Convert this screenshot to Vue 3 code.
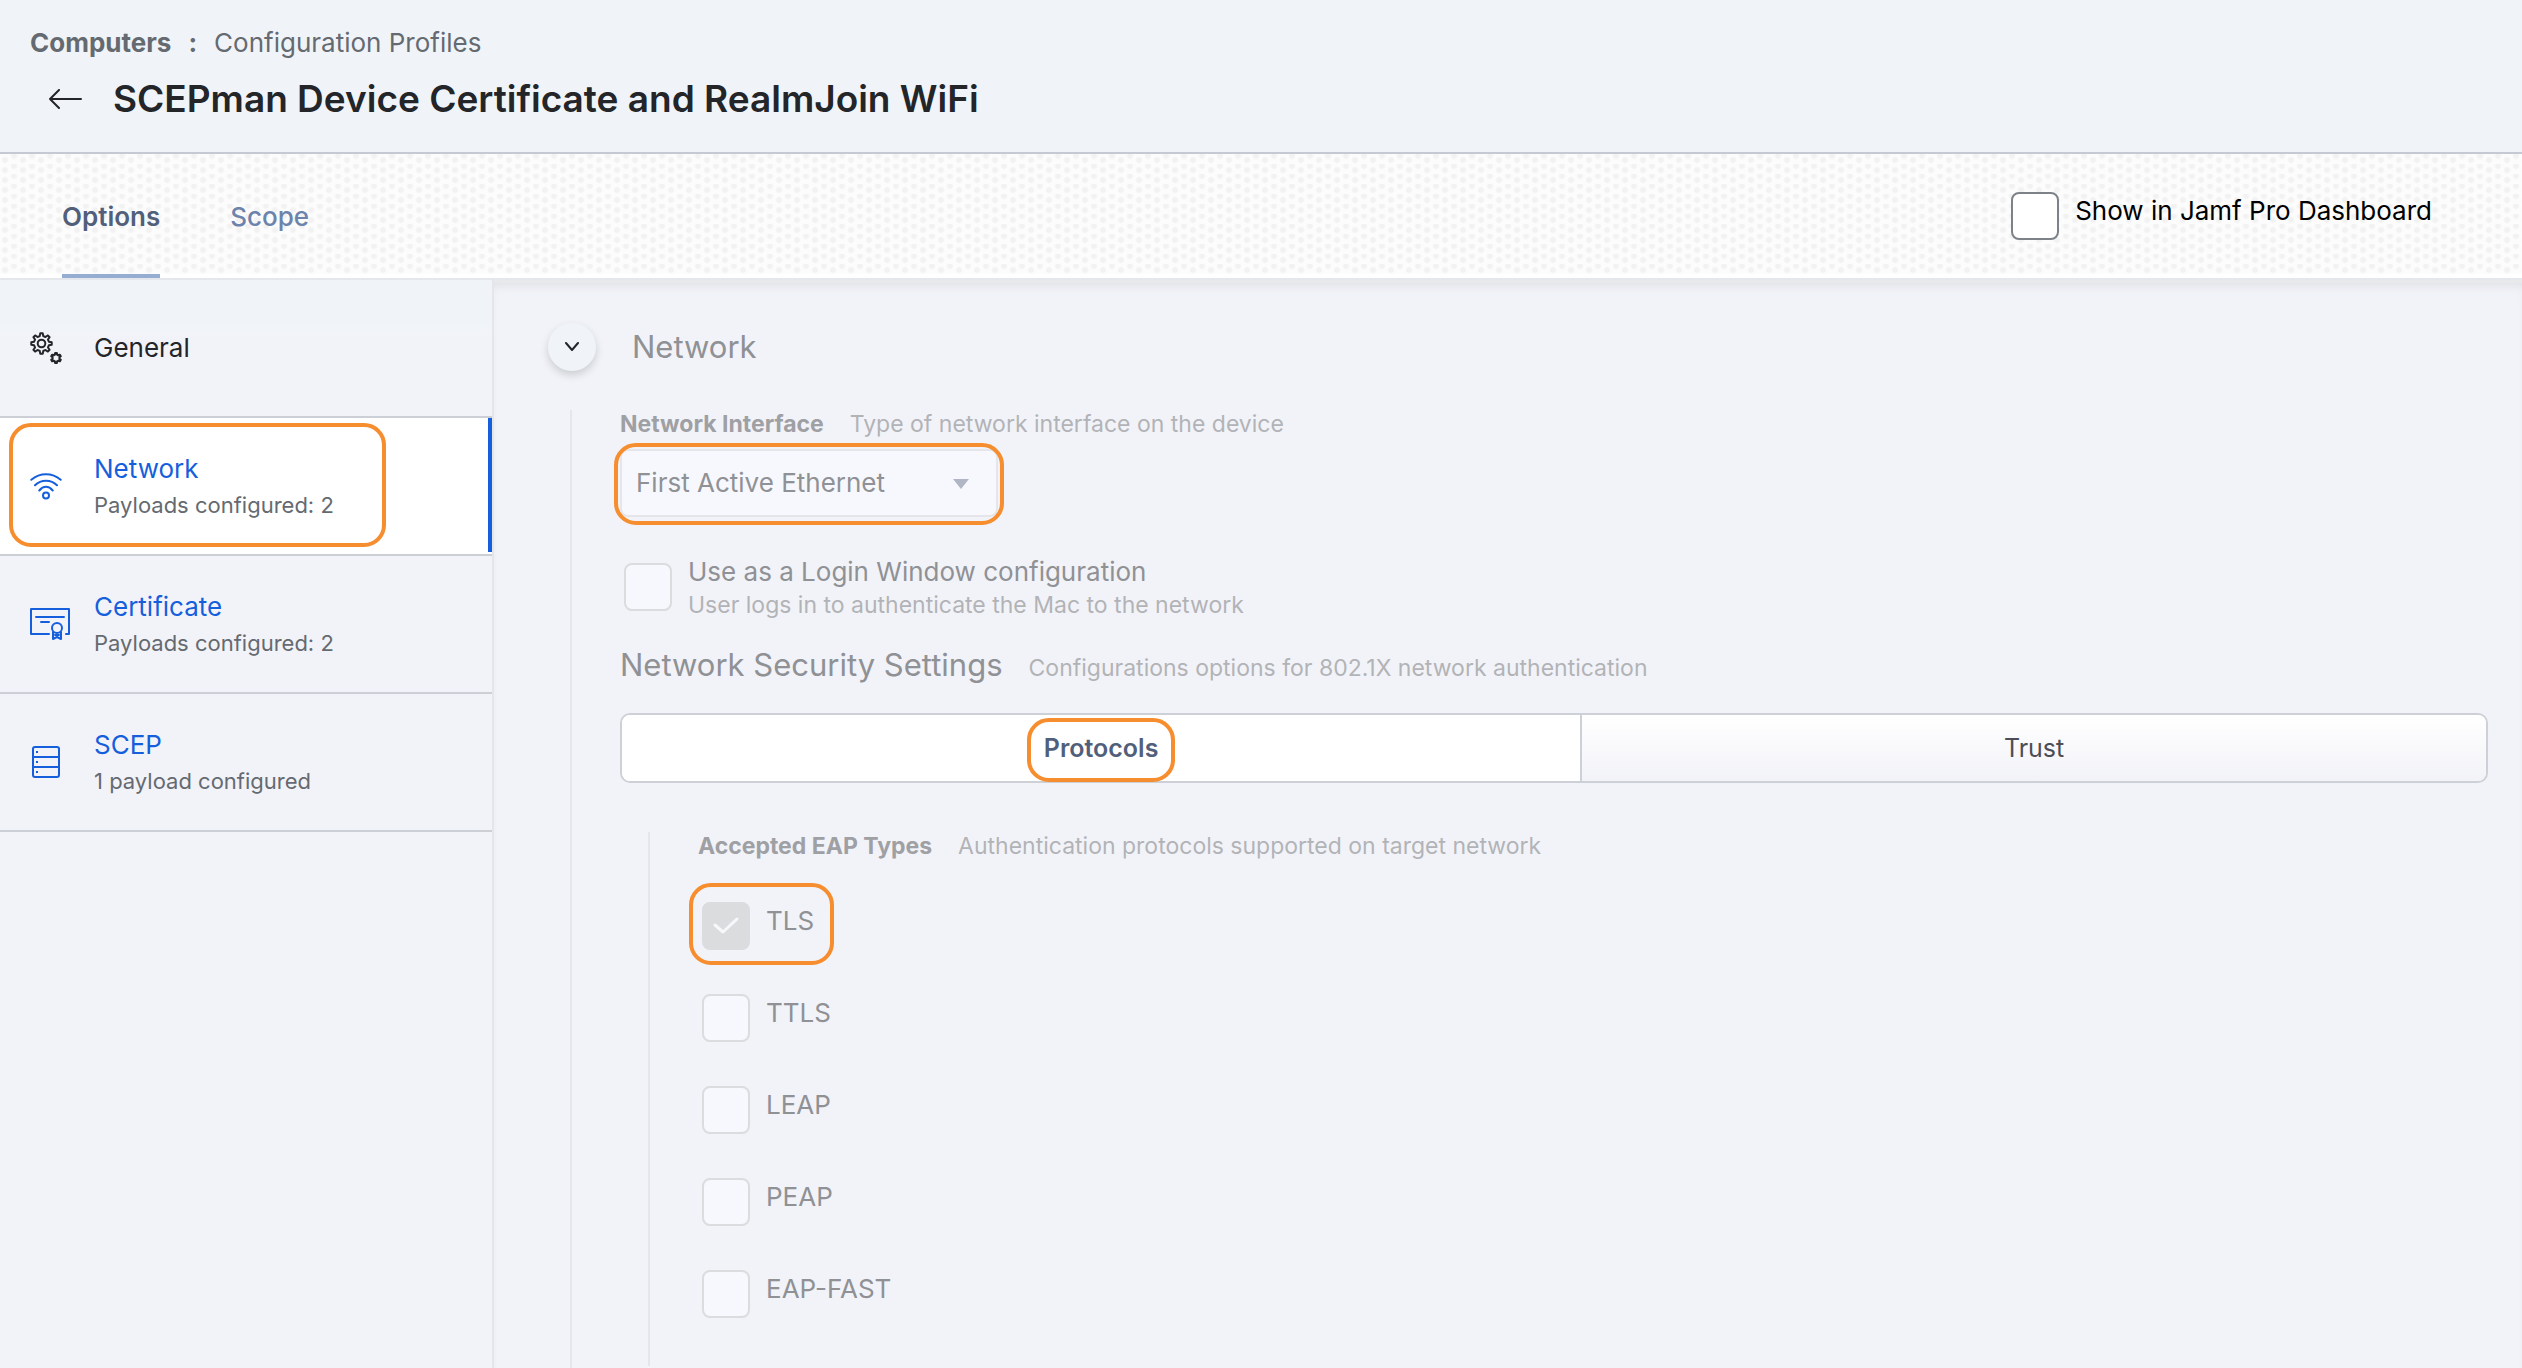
<script setup>
const payloads = [
  { name: 'General', icon: 'gears', note: '' },
  { name: 'Network', icon: 'wifi', note: 'Payloads configured: 2', active: true },
  { name: 'Certificate', icon: 'certificate', note: 'Payloads configured: 2' },
  { name: 'SCEP', icon: 'server', note: '1 payload configured' },
]

const eapTypes = [
  { name: 'TLS', checked: true },
  { name: 'TTLS', checked: false },
  { name: 'LEAP', checked: false },
  { name: 'PEAP', checked: false },
  { name: 'EAP-FAST', checked: false },
]

// Outline of a cog: each tooth is two outer and two inner points.
function cog(cx, cy, outer, inner, teeth) {
  const step = (Math.PI * 2) / teeth
  const points = []
  for (let i = 0; i < teeth; i++) {
    const a = i * step - Math.PI / 2
    for (const [offset, r] of [[-0.3, inner], [-0.15, outer], [0.15, outer], [0.3, inner]]) {
      const t = a + offset * step
      points.push(`${(cx + r * Math.cos(t)).toFixed(2)} ${(cy + r * Math.sin(t)).toFixed(2)}`)
    }
  }
  return `M${points.join('L')}Z`
}
const bigCog = cog(11.5, 11.5, 10.3, 7.6, 8)
const smallCog = cog(26, 26, 5, 3.6, 6)
</script>

<template>
  <div class="page">
    <header class="page-head">
      <nav class="crumbs" aria-label="Breadcrumb">
        <a href="#" class="crumb-root">Computers</a>
        <span class="crumb-root">:</span>
        <a href="#">Configuration Profiles</a>
      </nav>
      <div class="title-row">
        <button type="button" class="back" aria-label="Back">
          <svg width="34" height="20" viewBox="0 0 34 20" fill="none" stroke="#232529" stroke-width="2" stroke-linecap="round" stroke-linejoin="round">
            <path d="M10 1L1 10l9 9M1 10h31" />
          </svg>
        </button>
        <h1>SCEPman Device Certificate and RealmJoin WiFi</h1>
      </div>
    </header>

    <div class="tab-bar">
      <nav class="tabs">
        <a href="#" class="tab current">Options</a>
        <a href="#" class="tab">Scope</a>
      </nav>
      <label class="check dashboard">
        <span class="box"><input type="checkbox" /></span>
        <span class="check-text">Show in Jamf Pro Dashboard</span>
      </label>
    </div>

    <div class="columns">
      <aside class="sidebar">
        <a v-for="p in payloads" :key="p.name" href="#" class="payload" :class="{ active: p.active, plain: !p.note }">
          <span class="payload-icon">
            <svg v-if="p.icon === 'gears'" width="32" height="32" viewBox="0 0 32 32" fill="none" stroke="currentColor" stroke-width="2" stroke-linejoin="round">
              <path :d="bigCog" />
              <circle cx="11.5" cy="11.5" r="3.8" />
              <path :d="smallCog" stroke-width="2.2" />
            </svg>
            <svg v-else-if="p.icon === 'wifi'" width="32" height="28" viewBox="0 0 32 28" fill="none" stroke="currentColor" stroke-width="2" stroke-linecap="round">
              <path d="M1.3 7.8C10 .4 22 .4 30.7 7.8M5 13.3C11 7.2 21 7.2 27 13.3M9.3 18.5C13.3 13.6 18.7 13.6 22.7 18.5" />
              <circle cx="16" cy="23.5" r="3" />
            </svg>
            <svg v-else-if="p.icon === 'certificate'" width="40" height="32" viewBox="0 0 40 32" fill="none" stroke="currentColor" stroke-width="2" stroke-linecap="round" stroke-linejoin="round">
              <path d="M19 26H1V1h38v25h-3M6 9h28M11 14h8M23 24v7l4-2 4 2v-7M25 27h4" />
              <circle cx="27" cy="20" r="5" />
            </svg>
            <svg v-else width="32" height="32" viewBox="0 0 32 32" fill="none" stroke="currentColor" stroke-width="2">
              <rect x="3" y="1" width="26" height="30" rx="2" />
              <path d="M3 11h26M3 21h26M6 6h2M6 16h2M6 26h2" />
            </svg>
          </span>
          <span class="payload-text">
            <span class="payload-name">{{ p.name }}</span>
            <span v-if="p.note" class="payload-note">{{ p.note }}</span>
          </span>
        </a>
      </aside>

      <main class="content">
        <div class="section-head">
          <button type="button" class="toggle" aria-label="Collapse section">
            <svg width="16" height="10" viewBox="0 0 16 10" fill="none" stroke="#232529" stroke-width="2" stroke-linecap="round" stroke-linejoin="round">
              <path d="M2 1l6 7 6-7" />
            </svg>
          </button>
          <h2>Network</h2>
        </div>

        <div class="section-body">
          <div class="field-head">
            <label for="interface" class="field-label">Network Interface</label>
            <span class="help">Type of network interface on the device</span>
          </div>
          <div class="select-wrap marked">
            <select id="interface" disabled>
              <option>First Active Ethernet</option>
            </select>
            <svg class="caret" width="16" height="10" viewBox="0 0 16 10" fill="#b0b6c6"><path d="M0 0h16L8 10z" /></svg>
          </div>

          <label class="check login">
            <span class="box"><input type="checkbox" disabled /></span>
            <span class="login-text">
              <span>Use as a Login Window configuration</span>
              <span class="help">User logs in to authenticate the Mac to the network</span>
            </span>
          </label>

          <div class="field-head security">
            <h2>Network Security Settings</h2>
            <span class="help">Configurations options for 802.1X network authentication</span>
          </div>

          <div class="segments">
            <button type="button" class="segment selected"><span class="marked">Protocols</span></button>
            <button type="button" class="segment"><span>Trust</span></button>
          </div>

          <fieldset class="eap" aria-labelledby="eap-label">
            <div class="field-head">
              <span id="eap-label" class="field-label">Accepted EAP Types</span>
              <span class="help">Authentication protocols supported on target network</span>
            </div>
            <div class="eap-list">
              <label v-for="t in eapTypes" :key="t.name" class="check" :class="{ marked: t.checked }">
                <span class="box">
                  <input type="checkbox" :checked="t.checked" disabled />
                  <svg v-if="t.checked" class="tick" viewBox="0 0 48 48" fill="none" stroke="#f7f8fc" stroke-width="3" stroke-linecap="round" stroke-linejoin="round">
                    <path d="M13 23l8 7 14-13" />
                  </svg>
                </span>
                <span class="check-text">{{ t.name }}</span>
              </label>
            </div>
          </fieldset>
        </div>
      </main>
    </div>
  </div>
</template>

<style>
body {
  margin: 0;
  background: #f2f3f8;
}
</style>

<style scoped>
.page {
  display: flex;
  flex-direction: column;
  min-height: 100vh;
  font-family: Inter, "Liberation Sans", sans-serif;
  font-size: 26px;
  line-height: 32px;
  color: #8f9195;
}
a {
  color: inherit;
  text-decoration: none;
}
button {
  padding: 0;
  border: 0;
  background: none;
  font: inherit;
  color: inherit;
}
svg {
  display: block;
}
h1,
h2 {
  margin: 0;
}

.page-head {
  padding: 27px 30px 31px;
  border-bottom: 2px solid #c4c9d3;
  background: #f0f4f8;
}
.crumbs {
  display: flex;
  gap: 17px;
  color: #656a71;
}
.crumb-root {
  font-weight: 700;
}
.title-row {
  display: flex;
  align-items: center;
  gap: 30px;
  margin: 18px 0 0 19px;
}
h1 {
  font-size: 37px;
  font-weight: 600;
  line-height: 44px;
  color: #232529;
}

.tab-bar {
  display: flex;
  justify-content: space-between;
  align-items: center;
  padding: 0 90px 0 62px;
  border-bottom: 2px solid #e4e7eb;
  background-color: #fff;
  background-image:
    linear-gradient(#fff, #fff),
    radial-gradient(circle at 5px 6px, #f2f2f2 0, #f2f2f2 2px, transparent 4px),
    radial-gradient(circle at 14px 2px, #f2f2f2 0, #f2f2f2 2px, transparent 4px),
    linear-gradient(#fcfcfc, #fcfcfc);
  background-size: 100% 4px, 18px 10px, 18px 10px, 100% 100%;
  background-position: left bottom, left top, left top, left top;
  background-repeat: no-repeat, repeat, repeat, no-repeat;
}
.tabs {
  display: flex;
  gap: 70px;
}
.tab {
  padding: 47px 0 41px;
  border-bottom: 4px solid transparent;
  font-weight: 500;
  color: #6c83ab;
}
.tab.current {
  border-color: #94add0;
  font-weight: 600;
  color: #515f7b;
}

.check {
  display: flex;
  align-items: flex-start;
  gap: 16px;
}
.check-text {
  padding-top: 3px;
}
.box {
  position: relative;
  flex: none;
}
.box input {
  display: block;
  box-sizing: border-box;
  appearance: none;
  width: 48px;
  height: 48px;
  margin: 0;
  border: 2px solid #7d8188;
  border-radius: 8px;
  background: #fff;
}
.box input:disabled {
  border-color: #dbdcde;
  background: #f7f8fd;
}
.box input:disabled:checked {
  background: #dbdcde;
}
.tick {
  position: absolute;
  inset: 0;
}
.dashboard {
  color: #000;
}

.columns {
  display: flex;
  flex: 1;
}
.sidebar {
  flex: none;
  width: 492px;
  border-right: 2px solid #e4e6eb;
  background: linear-gradient(#f0f4f8, #f0f4f8 40px, #f2f3f8 60px);
}
.payload {
  display: flex;
  align-items: center;
  box-sizing: border-box;
  height: 138px;
  padding-left: 30px;
  border-bottom: 2px solid #cdcfd6;
  color: #155fdd;
}
.payload.plain {
  color: #232529;
}
.payload.active {
  position: relative;
  background: linear-gradient(#155fdd, #155fdd) right top / 4px 134px no-repeat #fff;
}
.payload-icon {
  flex: none;
  width: 64px;
}
.payload-text {
  display: flex;
  flex-direction: column;
  gap: 6px;
}
.payload-note {
  font-size: 22px;
  line-height: 28px;
  color: #656a71;
}

/* Orange call-out frames */
.marked {
  position: relative;
}
.payload.active::after,
.marked::after {
  content: "";
  position: absolute;
  inset: -6px -6px -8px;
  border: 4px solid #f68d2e;
  border-radius: 22px;
  pointer-events: none;
}
.payload.active::after {
  inset: 5px 106px 7px 9px;
}
.segment .marked::after {
  inset: -15px -17px -19px;
}
.check.marked::after {
  inset: -19px -20px -15px -13px;
}

.content {
  display: flex;
  flex: 1;
  flex-direction: column;
  padding: 43px 34px 0 54px;
  box-shadow: inset 0 3px 0 #e7e9eb, inset 0 10px 10px -4px #dfe1e6;
}
.section-head {
  display: flex;
  align-items: center;
  gap: 36px;
}
.toggle {
  display: flex;
  align-items: center;
  justify-content: center;
  width: 48px;
  height: 48px;
  border-radius: 50%;
  background: #f0f4f8;
  box-shadow: 0 4px 8px rgba(0, 0, 0, 0.16);
}
h2 {
  font-size: 31px;
  font-weight: 400;
  line-height: 38px;
}
.section-body {
  flex: 1;
  margin: 39px 0 0 22px;
  padding-left: 48px;
  border-left: 2px solid #e5e6eb;
}
.field-head {
  display: flex;
  align-items: baseline;
  gap: 26px;
}
.field-label {
  font-size: 23px;
  font-weight: 700;
  line-height: 28px;
  color: #9fa0a4;
}
.help {
  font-size: 23px;
  line-height: 28px;
  color: #b2b3b7;
}
.select-wrap {
  width: 378px;
  margin-top: 11px;
}
select {
  display: block;
  box-sizing: border-box;
  appearance: none;
  width: 100%;
  height: 68px;
  padding: 0 48px 0 14px;
  border: 2px solid #e5e6ea;
  border-radius: 8px;
  background: #f7f8fd;
  font: inherit;
  color: #8f9195;
  opacity: 1;
}
.caret {
  position: absolute;
  top: 30px;
  right: 29px;
}
.login {
  margin: 39px 0 0 4px;
}
.login .box {
  padding-top: 7px;
}
.login-text {
  display: flex;
  flex-direction: column;
  gap: 3px;
}
.security {
  margin-top: 27px;
}
.segments {
  display: flex;
  margin-top: 29px;
  border: 2px solid #cdd0d6;
  border-radius: 10px;
}
.segment {
  flex: 1 1 auto;
  height: 66px;
  border-radius: 0 8px 8px 0;
  background: linear-gradient(#fff, #f2f3f8);
  font-size: 25px;
  color: #4c4e57;
}
.segment.selected {
  border-right: 2px solid #cdd0d6;
  border-radius: 8px 0 0 8px;
  background: #fff;
  font-weight: 600;
  color: #515f7b;
}
.eap {
  min-width: 0;
  margin: 49px 0 0 28px;
  padding: 0 0 0 48px;
  border: 0;
  border-left: 2px solid #e5e6eb;
}
.eap-list {
  display: flex;
  flex-direction: column;
  align-items: flex-start;
  gap: 44px;
  margin: 42px 0 0 4px;
  padding-bottom: 48px;
}
</style>
